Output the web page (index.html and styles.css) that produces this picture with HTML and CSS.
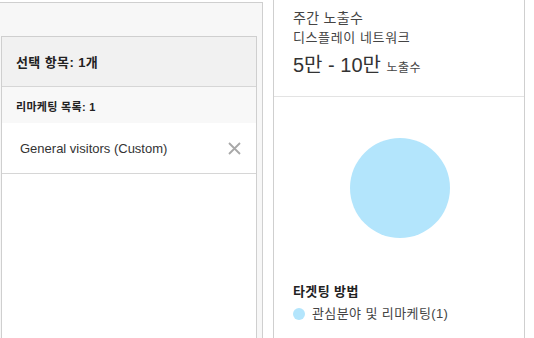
FILE: index.html
```html
<!DOCTYPE html>
<html>
  <head>
    <meta charset="utf-8">
    <link rel="stylesheet" href="styles.css">
  </head>
  <body>
    <div class="page">
      <div class="leftWrap">
        <div class="selPanel">
          <div class="selHeader">선택 항목: 1개</div>
          <div class="selSub">리마케팅 목록: 1</div>
          <div class="selRow">
            <span>General visitors (Custom)</span>
            <svg class="closeIcon" width="13" height="13" viewBox="0 0 13 13">
              <path d="M1 1 L12 12 M12 1 L1 12" stroke="#a8a8a8" stroke-width="1.8" fill="none"/>
            </svg>
          </div>
        </div>
      </div>

      <div class="statPanel">
        <div class="statHead">
          <div class="statTitle">주간 노출수</div>
          <div class="statNet">디스플레이 네트워크</div>
          <div class="statValue">5만 - 10만 <span class="statUnit">노출수</span></div>
        </div>
        <div class="chart">
          <svg width="100" height="100" viewBox="0 0 100 100">
            <circle cx="50" cy="50" r="50" fill="#b3e5fc"/>
          </svg>
        </div>
        <div class="legendTitle">타겟팅 방법</div>
        <div class="legendItem"><span class="dot"></span>관심분야 및 리마케팅(1)</div>
      </div>
    </div>
  </body>
</html>
```

FILE: styles.css
```css
body{
	margin: 0;
	width: 534px;
	height: 338px;
	overflow: hidden;
	background-color: #fff;
	font-family: "Liberation Sans", "Noto Sans CJK KR", sans-serif;
	color: #333;
}

.page{
	display: flex;
	height: 338px;
}

.leftWrap{
	display: flex;
	flex-direction: column;
	width: 263px;
	margin-top: 2px;
	padding-top: 33px;
	padding-left: 1px;
	box-sizing: border-box;
	background-color: #f7f7f7;
	border-top: 1px solid #cfcfcf;
	border-right: 1px solid #cfcfcf;
}

.selPanel{
	flex: 1;
	width: 256px;
	box-sizing: border-box;
	background-color: #fff;
	border: 1px solid #cfcfcf;
	border-bottom: none;
}

.selHeader{
	height: 49px;
	display: flex;
	align-items: center;
	padding-left: 14px;
	background-color: #f1f1f1;
	border-bottom: 1px solid #d6d6d6;
	font-size: 13px;
	font-weight: bold;
	letter-spacing: 0.4px;
	color: #222;
}

.selSub{
	height: 36px;
	box-sizing: border-box;
	padding-top: 12px;
	padding-left: 14px;
	line-height: 16px;
	background-color: #f8f8f8;
	font-size: 11px;
	font-weight: bold;
	letter-spacing: 0.3px;
	color: #222;
}

.selRow{
	height: 50px;
	display: flex;
	align-items: center;
	justify-content: space-between;
	padding-left: 18px;
	padding-right: 15px;
	border-bottom: 1px solid #d6d6d6;
	font-size: 13px;
	color: #333;
}

.closeIcon{
	display: block;
}

.statPanel{
	margin-left: 10px;
	width: 252px;
	box-sizing: border-box;
	border-left: 1px solid #cfcfcf;
	border-right: 1px solid #cfcfcf;
}

.statHead{
	padding: 8px 0 14px 19px;
	border-bottom: 1px solid #e3e3e3;
	color: #444;
}

.statTitle{
	font-size: 14px;
	line-height: 20px;
	letter-spacing: 0.3px;
}

.statNet{
	font-size: 13px;
	line-height: 20px;
	letter-spacing: 0.6px;
}

.statValue{
	margin-top: 3px;
	font-size: 20px;
	line-height: 28px;
	color: #333;
}

.statUnit{
	font-size: 12px;
	letter-spacing: 0.4px;
	color: #444;
}

.chart{
	display: flex;
	justify-content: center;
	margin-top: 41px;
	padding-left: 2px;
}

.chart svg{
	display: block;
}

.legendTitle{
	margin-top: 45px;
	padding-left: 19px;
	font-size: 13px;
	line-height: 18px;
	font-weight: bold;
	letter-spacing: 0.4px;
	color: #222;
}

.legendItem{
	display: flex;
	align-items: center;
	margin-top: 4px;
	padding-left: 19px;
	font-size: 13px;
	line-height: 18px;
	letter-spacing: 0.4px;
	color: #444;
}

.dot{
	width: 12px;
	height: 12px;
	border-radius: 50%;
	background-color: #b3e5fc;
	margin-right: 7px;
}
```
